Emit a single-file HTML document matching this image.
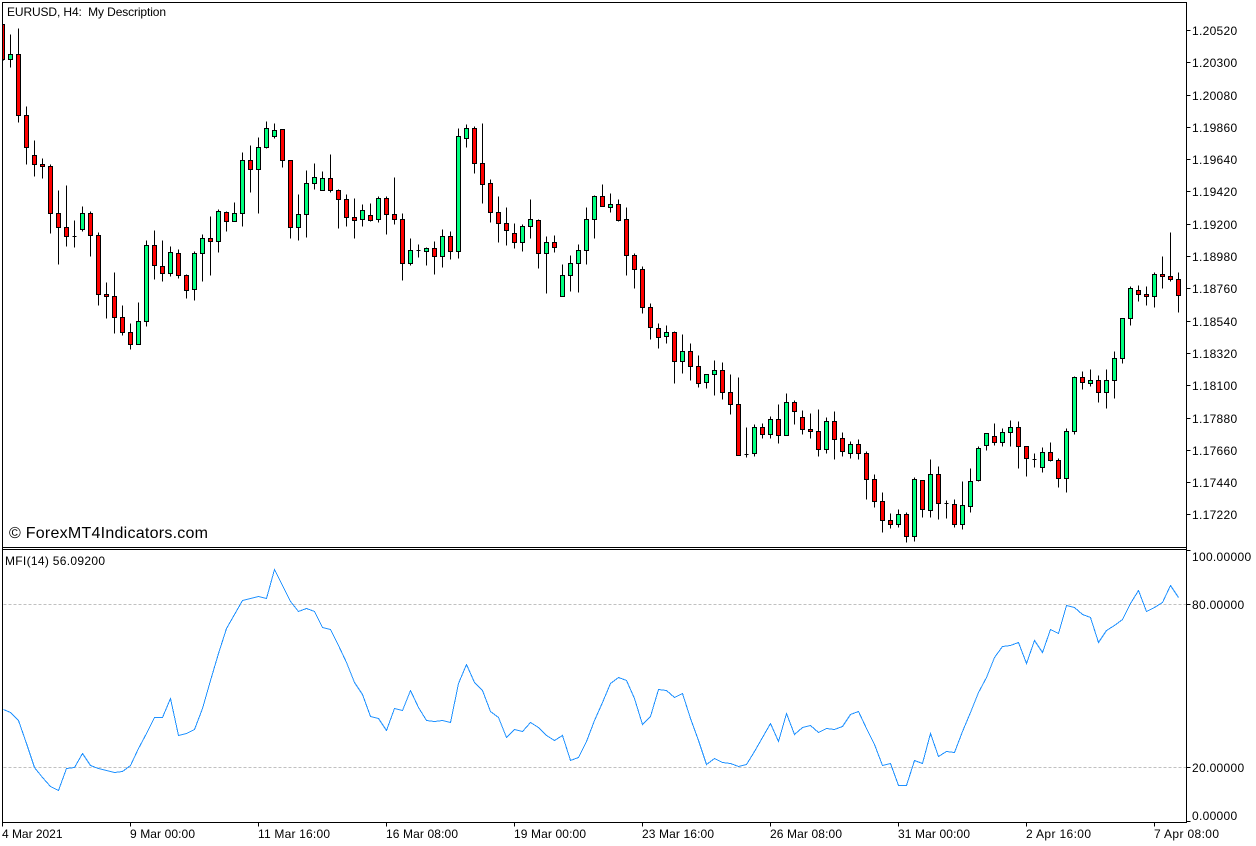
<!DOCTYPE html>
<html lang="en">
<head>
<meta charset="utf-8">
<title>EURUSD, H4</title>
<style>
html,body{margin:0;padding:0;background:#fff;width:1256px;height:846px;overflow:hidden}
svg{display:block;position:absolute;left:0;top:0}
text{font-family:"Liberation Sans",Arial,sans-serif;font-size:12px;fill:#000;white-space:pre}
.a{letter-spacing:.3px}
.w{font-size:16px}
</style>
</head>
<body>
<svg width="1256" height="846" viewBox="0 0 1256 846" xmlns="http://www.w3.org/2000/svg">
<rect width="1256" height="846" fill="#fff"/>
<g transform="translate(.5 .5)" shape-rendering="crispEdges" fill="none" stroke-width="1">
<!-- level lines -->
<path d="M3 604H1186M3 767H1186" stroke="#c0c0c0" stroke-dasharray="3 2"/>
<!-- frame -->
<path d="M2 2H1186V822H2ZM2 547H1186M2 549H1186" stroke="#000"/>
<!-- price ticks -->
<path d="M1186 30h4M1186 62h4M1186 95h4M1186 127h4M1186 159h4M1186 191h4M1186 224h4M1186 256h4M1186 288h4M1186 321h4M1186 353h4M1186 385h4M1186 418h4M1186 450h4M1186 482h4M1186 514h4M1186 550h4M1186 604h4M1186 767h4M1186 821h4" stroke="#000"/>
<!-- time ticks -->
<path d="M2 822v4M130 822v4M258 822v4M386 822v4M514 822v4M642 822v4M770 822v4M898 822v4M1026 822v4M1154 822v4" stroke="#000"/>
<!-- wicks -->
<path stroke="#000" d="M3 24V60M10 34V67M18 28V122M26 106V164M34 140V176M42 158V178M50 164V233M58 190V264M66 185V246M74 220V247M82 206V231M90 211V256M98 232V305M106 282V318M114 272V333M122 305V335M130 323V349M138 302V344M146 240V326M154 230V279M162 240V281M170 246V276M178 249V278M186 274V298M194 251V300M202 234V281M210 216V275M218 209V252M226 211V231M234 202V221M242 152V226M250 145V192M258 137V213M266 121V148M274 123V138M282 129V167M290 160V238M298 194V240M306 170V237M314 163V189M322 171V190M330 154V192M338 189V228M346 194V226M354 198V238M362 204V226M370 203V221M378 196V222M386 196V234M394 177V224M402 213V280M410 238V265M418 244V257M426 247V265M434 241V274M442 229V267M450 231V259M458 128V258M466 124V147M474 126V173M482 123V203M490 179V222M498 196V242M506 207V245M514 223V248M522 224V251M530 199V238M538 219V268M546 236V293M554 235V252M562 264V296M570 255V291M578 244V292M586 207V264M594 195V238M602 184V206M610 193V212M618 199V221M626 207V275M634 253V288M642 266V313M650 303V339M658 323V348M666 325V343M674 331V383M682 334V373M690 343V380M698 355V387M706 374V388M714 360V395M722 362V399M730 374V414M738 377V455M746 427V457M754 424V456M762 423V438M770 416V438M778 404V443M786 393V435M794 400V424M802 410V434M810 413V438M818 409V456M826 417V453M834 411V459M842 432V456M850 441V458M858 439V459M866 451V499M874 474V507M882 492V532M890 513V528M898 509V527M906 512V542M914 477V541M922 480V517M930 459V517M938 466V519M946 500V518M954 499V527M962 481V529M970 468V512M978 446V481M986 433V450M994 423V445M1002 428V446M1010 420V446M1018 421V468M1026 446V476M1034 453V467M1042 447V472M1050 442V461M1058 458V487M1066 428V492M1074 376V434M1082 371V389M1090 369V386M1098 375V402M1106 369V408M1114 351V398M1122 318V363M1130 286V325M1138 285V301M1146 286V305M1154 272V307M1162 256V288M1170 232V281M1178 272V312"/>
<!-- doji -->
<path stroke="#000" d="M72 236h4M416 250h4M744 454h4M944 503h4M1032 459h4"/>
<!-- bull bodies -->
<path stroke="#000" fill="#00ff7f" d="M8 54h4v5h-4zM80 213h4v16h-4zM136 321h4v23h-4zM144 245h4v76h-4zM168 252h4v21h-4zM192 253h4v36h-4zM200 238h4v15h-4zM216 211h4v30h-4zM232 213h4v8h-4zM240 160h4v53h-4zM256 147h4v22h-4zM264 128h4v19h-4zM272 130h4v6h-4zM296 214h4v13h-4zM304 183h4v31h-4zM312 177h4v6h-4zM320 178h4v12h-4zM360 210h4v9h-4zM376 198h4v21h-4zM408 250h4v13h-4zM424 248h4v3h-4zM440 236h4v20h-4zM456 136h4v115h-4zM464 128h4v10h-4zM520 226h4v16h-4zM528 219h4v7h-4zM544 242h4v11h-4zM560 275h4v21h-4zM568 263h4v12h-4zM576 250h4v13h-4zM584 219h4v31h-4zM592 196h4v23h-4zM608 204h4v3h-4zM664 332h4v4h-4zM680 351h4v10h-4zM704 374h4v8h-4zM712 370h4v4h-4zM752 427h4v26h-4zM768 419h4v15h-4zM784 402h4v33h-4zM824 421h4v28h-4zM848 444h4v9h-4zM896 514h4v10h-4zM912 479h4v57h-4zM928 474h4v36h-4zM960 505h4v19h-4zM968 481h4v25h-4zM976 448h4v32h-4zM984 433h4v12h-4zM1000 432h4v10h-4zM1008 427h4v5h-4zM1040 452h4v15h-4zM1064 431h4v47h-4zM1072 377h4v54h-4zM1088 380h4v3h-4zM1104 380h4v12h-4zM1112 358h4v22h-4zM1120 318h4v40h-4zM1128 288h4v30h-4zM1152 274h4v22h-4z"/>
<!-- bear bodies -->
<path stroke="#000" fill="#ff0000" d="M2 24h2v35h-2zM16 54h4v61h-4zM24 115h4v32h-4zM32 155h4v9h-4zM40 164h4v2h-4zM48 166h4v47h-4zM56 213h4v14h-4zM64 227h4v9h-4zM88 213h4v22h-4zM96 235h4v59h-4zM104 294h4v2h-4zM112 296h4v21h-4zM120 317h4v15h-4zM128 332h4v12h-4zM152 245h4v20h-4zM160 266h4v7h-4zM176 253h4v22h-4zM184 275h4v15h-4zM208 238h4v3h-4zM224 212h4v9h-4zM248 160h4v9h-4zM280 129h4v31h-4zM288 160h4v67h-4zM328 178h4v12h-4zM336 190h4v9h-4zM344 199h4v18h-4zM352 217h4v3h-4zM368 215h4v5h-4zM384 198h4v16h-4zM392 214h4v5h-4zM400 219h4v44h-4zM432 248h4v8h-4zM448 236h4v15h-4zM472 128h4v35h-4zM480 163h4v21h-4zM488 183h4v29h-4zM496 212h4v11h-4zM504 223h4v7h-4zM512 233h4v9h-4zM536 220h4v33h-4zM552 242h4v5h-4zM600 196h4v10h-4zM616 204h4v16h-4zM624 219h4v36h-4zM632 255h4v14h-4zM640 269h4v38h-4zM648 307h4v20h-4zM656 328h4v9h-4zM672 332h4v29h-4zM688 351h4v15h-4zM696 366h4v17h-4zM720 370h4v22h-4zM728 392h4v12h-4zM736 404h4v51h-4zM760 427h4v7h-4zM776 419h4v16h-4zM792 402h4v9h-4zM800 417h4v12h-4zM808 429h4v2h-4zM816 431h4v18h-4zM832 421h4v18h-4zM840 438h4v13h-4zM856 444h4v9h-4zM864 453h4v26h-4zM872 479h4v22h-4zM880 501h4v19h-4zM888 520h4v4h-4zM904 514h4v22h-4zM920 480h4v29h-4zM936 474h4v29h-4zM952 504h4v20h-4zM992 436h4v6h-4zM1016 427h4v19h-4zM1024 446h4v12h-4zM1048 452h4v8h-4zM1056 460h4v18h-4zM1080 377h4v5h-4zM1096 380h4v12h-4zM1136 290h4v4h-4zM1144 294h4v2h-4zM1160 274h4v2h-4zM1168 276h4v3h-4zM1176 279h4v16h-4z"/>
<!-- MFI -->
<polyline stroke="#1e90ff" points="3,709 10,712 18,720 26,743 34,767 42,777 50,786 58,790 66,768 74,767 82,753 90,765 98,768 106,770 114,772 122,771 130,765 138,748 146,733 154,717 162,717 170,698 178,735 186,733 194,729 202,708 210,680 218,653 226,628 234,614 242,600 250,598 258,596 266,598 274,569 282,585 290,601 298,611 306,608 314,611 322,627 330,629 338,645 346,662 354,682 362,694 370,716 378,718 386,730 394,708 402,710 410,690 418,707 426,720 434,721 442,720 450,722 458,683 466,664 474,682 482,690 490,711 498,717 506,737 514,729 522,731 530,722 538,727 546,735 554,740 562,735 570,760 578,757 586,741 594,720 602,702 610,683 618,677 626,680 634,698 642,724 650,716 658,689 666,690 674,697 682,693 690,718 698,740 706,764 714,758 722,762 730,763 738,766 746,764 754,751 762,737 770,723 778,741 786,713 794,734 802,727 810,725 818,732 826,728 834,729 842,726 850,714 858,711 866,728 874,744 882,765 890,763 898,785 906,785 914,760 922,763 930,733 938,756 946,751 954,752 962,731 970,712 978,692 986,677 994,657 1002,646 1010,645 1018,642 1026,663 1034,640 1042,652 1050,629 1058,633 1066,605 1074,607 1082,614 1090,617 1098,642 1106,630 1114,625 1122,619 1130,603 1138,590 1146,611 1154,607 1162,602 1170,585 1178,597"/>
</g>
<!-- labels -->
<text x="7" y="16" textLength="159">EURUSD, H4:  My Description</text>
<text class="w" x="9" y="538" textLength="199">© ForexMT4Indicators.com</text>
<text x="5" y="565" textLength="100">MFI(14) 56.09200</text>
<text class="a" x="1192" y="35">1.20520</text>
<text class="a" x="1192" y="67">1.20300</text>
<text class="a" x="1192" y="100">1.20080</text>
<text class="a" x="1192" y="132">1.19860</text>
<text class="a" x="1192" y="164">1.19640</text>
<text class="a" x="1192" y="196">1.19420</text>
<text class="a" x="1192" y="229">1.19200</text>
<text class="a" x="1192" y="261">1.18980</text>
<text class="a" x="1192" y="293">1.18760</text>
<text class="a" x="1192" y="326">1.18540</text>
<text class="a" x="1192" y="358">1.18320</text>
<text class="a" x="1192" y="390">1.18100</text>
<text class="a" x="1192" y="423">1.17880</text>
<text class="a" x="1192" y="455">1.17660</text>
<text class="a" x="1192" y="487">1.17440</text>
<text class="a" x="1192" y="519">1.17220</text>
<text class="a" x="1192" y="561">100.00000</text>
<text class="a" x="1192" y="609">80.00000</text>
<text class="a" x="1192" y="772">20.00000</text>
<text class="a" x="1192" y="820">0.00000</text>
<text x="2" y="838" textLength="60.5">4 Mar 2021</text>
<text x="130" y="838" textLength="65">9 Mar 00:00</text>
<text x="258" y="838" textLength="72">11 Mar 16:00</text>
<text x="386" y="838" textLength="72">16 Mar 08:00</text>
<text x="514" y="838" textLength="72">19 Mar 00:00</text>
<text x="642" y="838" textLength="72">23 Mar 16:00</text>
<text x="770" y="838" textLength="72">26 Mar 08:00</text>
<text x="898" y="838" textLength="72">31 Mar 00:00</text>
<text x="1026" y="838" textLength="65">2 Apr 16:00</text>
<text x="1154" y="838" textLength="65">7 Apr 08:00</text>
</svg>
</body>
</html>
